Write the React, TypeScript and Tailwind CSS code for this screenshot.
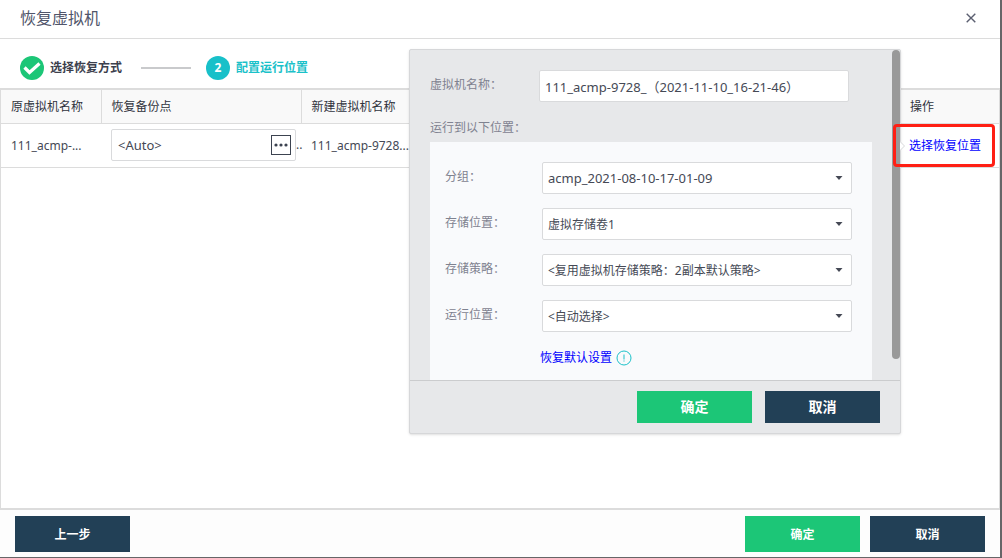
import React, { useState } from "react";
import clsx from "clsx";

const fields = [
  { id: "group", label: "分组：", options: ["acmp_2021-08-10-17-01-09"], latin: true },
  { id: "storage", label: "存储位置：", options: ["虚拟存储卷1"] },
  { id: "policy", label: "存储策略：", options: ["<复用虚拟机存储策略：2副本默认策略>"] },
  { id: "host", label: "运行位置：", options: ["<自动选择>"] },
];

type ButtonProps = {
  children: React.ReactNode;
  primary?: boolean;
  className?: string;
};

const ActionButton = ({ children, primary, className }: ButtonProps) => (
  <button
    type="button"
    className={clsx(
      "w-[115px] font-bold text-white",
      primary ? "bg-[#1cc677]" : "bg-[#224056]",
      className
    )}
  >
    {children}
  </button>
);

type SelectProps = { id: string; label: string; options: string[]; latin?: boolean };

const SelectRow = ({ id, label, options, latin }: SelectProps) => (
  <div className="flex">
    <label htmlFor={id} className="w-[97px] pt-[5px] leading-5 text-[#7f8290]">
      {label}
    </label>
    <div className="relative w-[310px]">
      <select
        id={id}
        className={clsx(
          "h-8 w-full appearance-none rounded-xs border border-[#d9dadc] bg-white pl-[5px] pr-6 pt-px text-[#454955] outline-none",
          latin && "text-[13px]"
        )}
      >
        {options.map((option) => (
          <option key={option}>{option}</option>
        ))}
      </select>
      <svg viewBox="0 0 8 4" className="pointer-events-none absolute right-[9px] top-3.5 h-1 w-2" fill="#454955">
        <path d="M.5 0h7L4 4z" />
      </svg>
    </div>
  </div>
);

const Steps = () => (
  <ol className="flex items-center px-5 pt-[17px] pb-2 font-bold">
    <li className="flex items-center gap-1.5 text-[#3c404d]">
      <svg viewBox="0 0 24 24" className="size-6">
        <circle cx="12" cy="12" r="12" fill="#1cc677" />
        <path d="M4.5 11.5l5 5L19.5 7.5" fill="none" stroke="#fff" strokeWidth="3.2" />
      </svg>
      选择恢复方式
    </li>
    <li aria-hidden="true" className="ml-[19px] mr-[15px] h-0.5 w-[50px] bg-[#c9cacc]" />
    <li className="flex items-center gap-1.5 text-[#1bc1c9]">
      <span className="flex size-6 items-center justify-center rounded-full bg-[#18c0c9] text-white">2</span>
      配置运行位置
    </li>
  </ol>
);

const LocationPopover = () => {
  const [name, setName] = useState("111_acmp-9728_（2021-11-10_16-21-46）");

  return (
    <form className="absolute right-[99px] top-[49px] z-10 w-[492px] rounded-xs border border-[#d6d7d9] bg-[#e7e8ea] shadow">
      <div className="relative h-[330px] overflow-hidden px-5 pt-5">
        <div className="flex">
          <label htmlFor="vm-name" className="w-[109px] pt-[5px] leading-5 text-[#7f8290]">
            虚拟机名称：
          </label>
          <input
            id="vm-name"
            value={name}
            onChange={(e) => setName(e.target.value)}
            className="h-8 w-[310px] rounded-xs border border-[#d9dadc] bg-white px-[5px] text-[13px] text-[#454955] outline-none"
          />
        </div>
        <p className="mt-4 leading-5 text-[#7f8290]">运行到以下位置：</p>
        <div className="mt-1 mr-2 flex h-full flex-col gap-3.5 bg-[#f9fafc] pl-[15px] pt-5">
          {fields.map((field) => (
            <SelectRow key={field.id} {...field} />
          ))}
          <div className="ml-[95px] flex items-center gap-1">
            <a href="#reset" className="leading-6 text-[#0000ff]">
              恢复默认设置
            </a>
            <svg viewBox="0 0 16 16" className="size-4" fill="none" stroke="#1bc1c9">
              <circle cx="8" cy="8" r="7" />
              <path d="M8 4.5v5M8 10.5v1" />
            </svg>
          </div>
        </div>
        <div className="absolute right-0 top-0 h-[309px] w-2 rounded-full bg-[#999999]" />
      </div>
      <div className="flex justify-end gap-[13px] border-t border-[#cbccce] px-5 py-2.5 text-sm">
        <ActionButton primary className="h-8">确定</ActionButton>
        <ActionButton className="h-8">取消</ActionButton>
      </div>
    </form>
  );
};

const VmTable = () => (
  <table className="w-full table-fixed border-collapse text-left text-[#454955]">
    <thead>
      <tr className="h-[33px] border-b border-[#dcdcdc] bg-[#f9f9f9] text-[#30333d]">
        <th className="w-[100px] border-r border-[#dcdcdc] px-2.5 pt-0.5 font-normal">原虚拟机名称</th>
        <th className="w-[200px] border-r border-[#dcdcdc] px-2.5 pt-0.5 font-normal">恢复备份点</th>
        <th className="w-[110px] px-2.5 pt-0.5 font-normal">新建虚拟机名称</th>
        <th />
        <th className="w-[99px] px-2.5 pt-0.5 font-normal">操作</th>
      </tr>
    </thead>
    <tbody>
      <tr className="h-11 border-b border-[#dcdcdc]">
        <td className="whitespace-nowrap pl-2.5 pt-0.5">111_acmp-...</td>
        <td className="pl-2.5">
          <div className="flex items-center">
            <div className="flex h-8 w-[185px] shrink-0 items-center rounded-xs border border-[#d9dadc] bg-white pl-1.5 pr-1">
              <input
                aria-label="恢复备份点"
                defaultValue="<Auto>"
                className="min-w-0 flex-1 pt-0.5 text-[13px] outline-none"
              />
              <button
                type="button"
                aria-label="选择备份点"
                className="flex size-5 items-center justify-center border border-[#3c4350]"
              >
                <svg viewBox="0 0 14 4" className="h-1 w-3.5" fill="#3c4350">
                  <circle cx="2" cy="2" r="1.6" />
                  <circle cx="7" cy="2" r="1.6" />
                  <circle cx="12" cy="2" r="1.6" />
                </svg>
              </button>
            </div>
            <span>..</span>
          </div>
        </td>
        <td className="whitespace-nowrap pl-2.5 pt-0.5">111_acmp-9728...</td>
        <td />
        <td className="relative z-20 pl-[9px] pt-0.5">
          <svg viewBox="0 0 5 10" className="absolute left-0 top-[17px] h-2.5 w-[5px]" fill="#fff" stroke="#d6d7d9">
            <path d="M0 .5L4.5 5 0 9.5" />
          </svg>
          <a href="#location" className="whitespace-nowrap text-[#0000ff]">
            选择恢复位置
          </a>
          <span className="pointer-events-none absolute inset-y-0 -left-[7px] right-1 rounded-sm border-3 border-[#ff1f14]" />
        </td>
      </tr>
    </tbody>
  </table>
);

const App = () => {
  return (
    <div className="flex min-h-screen bg-[#666668] pr-0.5 pb-px font-['Noto_Sans','Noto_Sans_CJK_SC',sans-serif] text-xs">
      <div className="relative flex flex-1 flex-col bg-white">
        <header className="flex items-center justify-between border-b border-[#dcdcdc] px-5 pt-1.5 pb-2">
          <h1 className="text-base text-[#50556a]">恢复虚拟机</h1>
          <button type="button" aria-label="关闭" className="p-1">
            <svg viewBox="0 0 10 10" className="size-2.5" stroke="#5b5f70" strokeWidth="1.4">
              <path d="M.7.7l8.6 8.6M9.3.7L.7 9.3" />
            </svg>
          </button>
        </header>

        <Steps />

        <main className="flex-1 border-x border-t-2 border-[#dcdcdc]">
          <VmTable />
        </main>

        <LocationPopover />

        <footer className="flex items-center gap-2.5 border-t-2 border-[#dcdcdc] bg-[#fdfdfd] px-[15px] pt-1.5 pb-[5px]">
          <ActionButton className="mr-auto h-9 pt-0.5">上一步</ActionButton>
          <ActionButton primary className="h-9 pt-0.5">确定</ActionButton>
          <ActionButton className="h-9 pt-0.5">取消</ActionButton>
        </footer>
      </div>
    </div>
  );
};

export default App;
